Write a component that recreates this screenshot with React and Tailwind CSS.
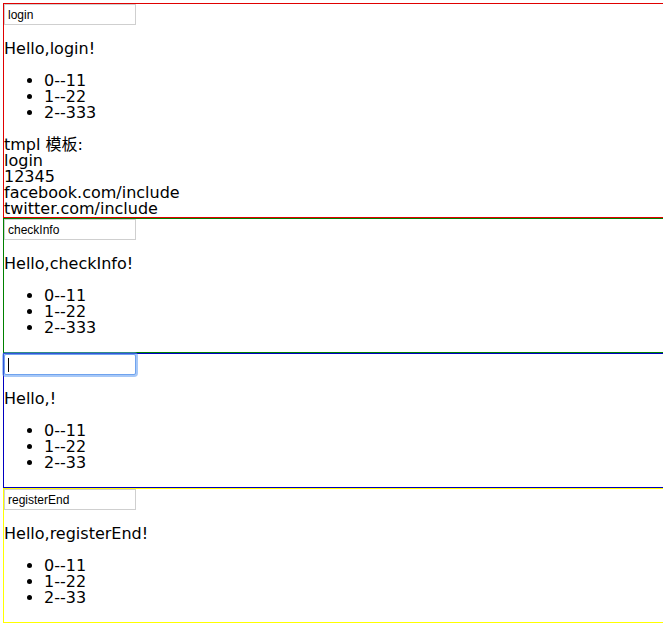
const font = { fontFamily: '"DejaVu Sans", "Noto Sans CJK SC", sans-serif' };

const sections = [
  { name: "login", value: "login", items: ["0--11", "1--22", "2--333"], color: "border-[#e00000]", tmpl: true },
  { name: "checkInfo", value: "checkInfo", items: ["0--11", "1--22", "2--333"], color: "border-[#008000]" },
  { name: "", value: "", items: ["0--11", "1--22", "2--33"], color: "border-[#0000c0]", focused: true },
  { name: "registerEnd", value: "registerEnd", items: ["0--11", "1--22", "2--33"], color: "border-[#ffff00]" },
];

function NameInput({ value, focused }) {
  if (focused) {
    return (
      <div className="flex h-[21px] w-[132px] items-center rounded-[2px] border border-[#6fa3ee] bg-white pl-[3px] shadow-[0_0_0_2px_rgba(94,154,240,0.55)]">
        <span className="h-[14px] w-px bg-black" />
      </div>
    );
  }
  return (
    <input
      readOnly
      value={value}
      className="block h-[21px] w-[132px] border border-[#cfcfcf] bg-white px-[3px] text-[12px] text-black outline-none"
      style={{ fontFamily: '"Liberation Sans", Arial, sans-serif' }}
    />
  );
}

function Section({ s }) {
  return (
    <div className={`border border-r-0 ${s.color}`}>
      <NameInput value={s.value} focused={s.focused} />
      <p className="my-4 text-[16px] leading-4">Hello,{s.name}!</p>
      <ul className="my-4 list-disc pl-10 text-[16px] leading-4">
        {s.items.map((it) => (
          <li key={it}>{it}</li>
        ))}
      </ul>
      {s.tmpl && (
        <div className="text-[16px] leading-4">
          <div>tmpl 模板:</div>
          <div>login</div>
          <div>12345</div>
          <div>facebook.com/include</div>
          <div>twitter.com/include</div>
        </div>
      )}
    </div>
  );
}

export default function App() {
  return (
    <div className="min-h-screen bg-white pl-[3px] pt-[3px] text-black" style={font}>
      {sections.map((s, i) => (
        <Section key={i} s={s} />
      ))}
    </div>
  );
}
